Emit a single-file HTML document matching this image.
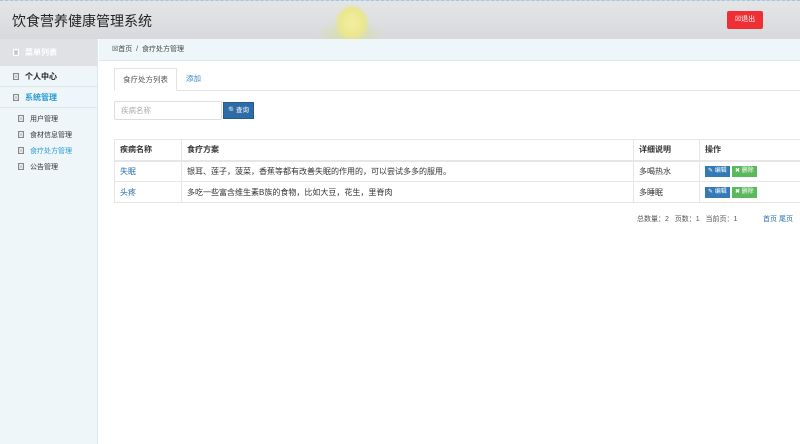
<!DOCTYPE html>
<html><head><meta charset="utf-8"><style>
*{margin:0;padding:0;box-sizing:border-box}
body{width:800px;height:444px;overflow:hidden;background:#fff;font-family:"Liberation Sans","Noto Sans CJK SC",sans-serif;font-size:8px;color:#333;position:relative}
.hdr{position:absolute;left:0;top:0;width:800px;height:39px;background:linear-gradient(#e4e5e7,#d8d9dc);border-top:1px dashed #9cc8e8}
.hdr h1{position:absolute;left:12px;top:10px;font-size:14px;font-weight:normal;color:#222}
.corn{position:absolute;left:300px;top:0;width:100px;height:39px;background:radial-gradient(ellipse 22px 24px at 52px 22px,#f3eea0,#e9e690 60%,transparent 80%),radial-gradient(ellipse 50px 22px at 50px 34px,#d4e0a0 0%,transparent 70%)}
.out{position:absolute;left:727px;top:10px;width:36px;height:18px;background:#ee2f34;border-radius:2px;color:#fff;font-size:7px;text-align:center;line-height:18px}
.side{position:absolute;left:0;top:39px;width:98px;height:405px;background:#eef6fa;border-right:1px solid #dde8ee}
.mh{height:27px;background:#dfe1e4;color:#fff;font-size:8px;line-height:27px;padding-left:13px;font-weight:bold}
.mi{height:21px;line-height:21px;padding-left:13px;font-size:8px;font-weight:bold;border-bottom:1px solid #dbe5ea;color:#222}
.sub{padding-left:18px;font-size:7px;color:#333;height:16px;line-height:16px}
.blue{color:#2a9bd6}
.x{display:inline-block;width:6px;height:7px;border:1px solid #888;margin-right:6px;vertical-align:-1px;background:linear-gradient(45deg,transparent 45%,#888 45%,#888 55%,transparent 55%),linear-gradient(-45deg,transparent 45%,#888 45%,#888 55%,transparent 55%)}
.bc{position:absolute;left:99px;top:39px;width:701px;height:22px;background:#eef6fa;border-bottom:1px solid #d9e6ee;font-size:7px;line-height:22px;padding-left:13px;color:#444}
.tabs{position:absolute;left:114px;top:68px;width:686px;height:23px;border-bottom:1px solid #e3e3e3}
.tab{position:absolute;top:0;height:23px;line-height:22px;font-size:7.5px;padding:0 8px}
.t1{left:0;border:1px solid #e3e3e3;border-bottom:1px solid #fff;background:#fff;color:#555}
.t2{left:64px;color:#3a87c8}
.inp{position:absolute;left:114px;top:101px;width:108px;height:19px;border:1px solid #ddd;border-radius:2px;font-size:7.5px;color:#aaa;line-height:17px;padding-left:6px}
.btn{position:absolute;left:223px;top:102px;width:31px;height:17px;background:#2d6ca8;border:1px solid #245a8e;color:#fff;font-size:6.5px;text-align:center;line-height:15px}
table{position:absolute;left:114px;top:139px;border-collapse:collapse;width:700px;font-size:8px}
td,th{border:1px solid #e6e6e6;height:21px;padding:0 5px;text-align:left;color:#333}
th{font-weight:bold;border-bottom:2px solid #e6e6e6}
a{color:#2a6fb0;text-decoration:none}
.b{display:inline-block;height:11px;line-height:11px;font-size:6px;color:#fff;padding:0 3px;vertical-align:middle}
.pg{position:absolute;top:214px;font-size:7px;color:#555}
</style></head><body>
<div class="hdr"><h1>饮食营养健康管理系统</h1><div class="corn"></div><div class="out">☒退出</div></div>
<div class="side">
<div class="mh"><span class="x" style="border-color:#fff"></span>菜单列表</div>
<div class="mi"><span class="x"></span>个人中心</div>
<div class="mi blue"><span class="x"></span>系统管理</div>
<div style="height:4px"></div>
<div class="sub"><span class="x"></span>用户管理</div>
<div class="sub"><span class="x"></span>食材信息管理</div>
<div class="sub blue"><span class="x"></span>食疗处方管理</div>
<div class="sub"><span class="x"></span>公告管理</div>
</div>
<div class="bc">☒首页 &nbsp;/&nbsp; 食疗处方管理</div>
<div class="tabs"><div class="tab t1">食疗处方列表</div><div class="tab t2">添加</div></div>
<div class="inp">疾病名称</div><div class="btn">🔍查询</div>
<table>
<tr><th style="width:67px">疾病名称</th><th style="width:452px">食疗方案</th><th style="width:66px">详细说明</th><th>操作</th></tr>
<tr><td><a>失眠</a></td><td>银耳、莲子，菠菜，香蕉等都有改善失眠的作用的，可以尝试多多的服用。</td><td>多喝热水</td><td><span class="b" style="background:#337ab7">✎ 编辑</span> <span class="b" style="background:#5cb85c">✖ 删除</span></td></tr>
<tr><td><a>头疼</a></td><td>多吃一些富含维生素B族的食物，比如大豆，花生，里脊肉</td><td>多睡眠</td><td><span class="b" style="background:#337ab7">✎ 编辑</span> <span class="b" style="background:#5cb85c">✖ 删除</span></td></tr>
</table>
<div class="pg" style="left:637px">总数量：2 &nbsp; 页数：1 &nbsp; 当前页：1</div>
<div class="pg" style="left:763px;color:#2a6fb0">首页 尾页</div>
</body></html>
